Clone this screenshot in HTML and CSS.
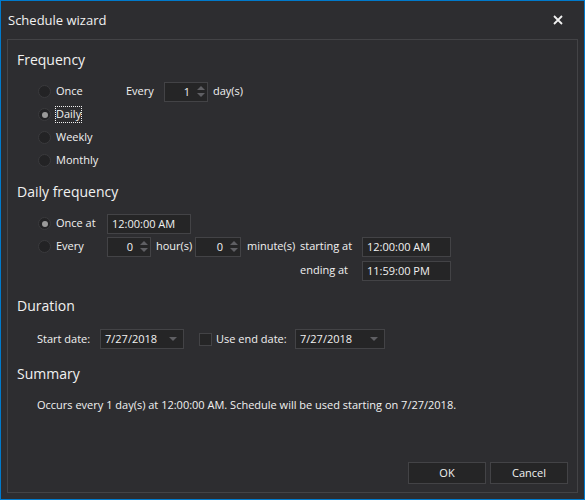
FILE: index.html
```html
<!DOCTYPE html>
<html>
<head>
<meta charset="utf-8">
<link rel="stylesheet" href="styles.css">
</head>
<body>
<div class="window">
  <div class="titlebar">
    <span class="title">Schedule wizard</span>
    <svg class="close" width="10" height="10" viewBox="0 0 10 10"><path d="M1 1L9 9M9 1L1 9" stroke="#f1f1f1" stroke-width="1.8"/></svg>
  </div>
  <div class="panel">
    <div class="heading">Frequency</div>
    <div class="rows first">
      <div class="row">
        <div class="opt w88"><span class="radio"></span><span class="lbl">Once</span></div>
        <span class="cell w38">Every</span>
        <div class="spin w44"><span class="val">1</span><span class="arrows"><i class="up"></i><i class="down"></i></span></div>
        <span class="cell pl5">day(s)</span>
      </div>
      <div class="row">
        <div class="opt"><span class="radio on"></span><span class="lbl focus">Daily</span></div>
      </div>
      <div class="row">
        <div class="opt"><span class="radio"></span><span class="lbl">Weekly</span></div>
      </div>
      <div class="row">
        <div class="opt"><span class="radio"></span><span class="lbl">Monthly</span></div>
      </div>
    </div>

    <div class="heading">Daily frequency</div>
    <div class="rows first">
      <div class="row">
        <div class="opt w69"><span class="radio on"></span><span class="lbl">Once at</span></div>
        <div class="box w84">12:00:00 AM</div>
      </div>
      <div class="row">
        <div class="opt w69"><span class="radio"></span><span class="lbl">Every</span></div>
        <div class="spin w44"><span class="val">0</span><span class="arrows"><i class="up"></i><i class="down"></i></span></div>
        <span class="cell w44 pl5">hour(s)</span>
        <div class="spin w46"><span class="val">0</span><span class="arrows"><i class="up"></i><i class="down"></i></span></div>
        <span class="cell w59 pl6">minute(s)</span>
        <span class="cell w62">starting at</span>
        <div class="box w89">12:00:00 AM</div>
      </div>
      <div class="row tall">
        <span class="spacer"></span>
        <span class="cell w62">ending at</span>
        <div class="box w89">11:59:00 PM</div>
      </div>
    </div>

    <div class="heading dur">Duration</div>
    <div class="rows dates">
      <div class="row ind">
        <span class="cell w63">Start date:</span>
        <div class="drop w84"><span>7/27/2018</span><i class="caret"></i></div>
        <span class="check"></span>
        <span class="cell w79">Use end date:</span>
        <div class="drop w90"><span>7/27/2018</span><i class="caret"></i></div>
      </div>
    </div>

    <div class="heading sum">Summary</div>
    <div class="rows summary">
      <div class="row ind">Occurs every 1 day(s) at 12:00:00 AM. Schedule will be used starting on 7/27/2018.</div>
    </div>

    <div class="footer">
      <button class="btn">OK</button>
      <button class="btn">Cancel</button>
    </div>
  </div>
</div>
</body>
</html>
```

FILE: styles.css
```css
* { box-sizing: border-box; }
html, body { margin: 0; padding: 0; background: #2d2d30; }
body {
  font-family: "Open Sans", "Noto Sans", sans-serif;
  font-size: 11px;
  color: #f1f1f1;
}
.window {
  width: 585px;
  height: 500px;
  border: 1px solid #007acc;
  background: #2d2d30;
  display: flex;
  flex-direction: column;
}
.titlebar {
  height: 38px;
  display: flex;
  align-items: center;
  padding-left: 7px;
  padding-right: 21px;
  padding-bottom: 1px;
  justify-content: space-between;
}
.title { font-size: 13px; color: #f1f1f1; }
.close { display: block; }
.panel {
  margin-left: 6px;
  width: 571px;
  height: 454px;
  border: 1px solid #434346;
  padding: 10px 9px 8px 9px;
  display: flex;
  flex-direction: column;
}
.heading {
  font-size: 14px;
  line-height: 19px;
  height: 20px;
  color: #f1f1f1;
}
.heading + .rows { margin-top: 10px; }
.rows + .heading { margin-top: 10px; }
.heading.dur { margin-top: 14px; }
.rows.dates { margin-top: 12px; }
.heading.sum { margin-top: 13px; }
.rows.summary { margin-top: 9px; }
.row {
  height: 23px;
  display: flex;
  align-items: center;
  padding-left: 21px;
  white-space: nowrap;
  line-height: 15px;
}
.row.tall { height: 24px; padding-top: 1px; }
.row.ind { padding-left: 20px; }
.lbl, .val, .row.ind { padding-bottom: 1px; }
.cell { padding-bottom: 2px; }
.opt { display: flex; align-items: center; flex: none; }
.radio {
  width: 13px;
  height: 13px;
  border-radius: 50%;
  background: #232325;
  border: 1px solid #3a3a3d;
  flex: none;
  display: flex;
  align-items: center;
  justify-content: center;
}
.radio.on::after {
  content: "";
  width: 6px;
  height: 6px;
  border-radius: 50%;
  background: #9a9a9a;
}
.lbl { border: 1px dotted transparent; margin-left: 4px; line-height: 14px; }
.lbl.focus { border-color: #f1f1f1; }
.cell { flex: none; }
.w38 { width: 38px; }
.w44 { width: 44px; }
.w46 { width: 46px; }
.w59 { width: 59px; }
.w62 { width: 62px; }
.w63 { width: 63px; }
.w69 { width: 69px; }
.w79 { width: 79px; }
.w84 { width: 84px; }
.w88 { width: 88px; }
.w89 { width: 89px; }
.w90 { width: 90px; }
.pl5 { padding-left: 5px; }
.pl6 { padding-left: 6px; }
.spacer { width: 262px; flex: none; }
.spin, .box, .drop {
  height: 20px;
  background: #252526;
  border: 1px solid #434346;
  flex: none;
  display: flex;
  align-items: center;
}
.box, .drop > span { padding-bottom: 1px; }
.spin { justify-content: flex-end; }
.spin .val { margin-right: 5px; }
.arrows {
  width: 12px;
  height: 18px;
  display: flex;
  flex-direction: column;
  align-items: center;
  justify-content: center;
  gap: 3px;
}
.arrows i {
  display: block;
  width: 0;
  height: 0;
  border-left: 4px solid transparent;
  border-right: 4px solid transparent;
}
.arrows .up { border-bottom: 4px solid #5f5f63; }
.arrows .down { border-top: 4px solid #5f5f63; }
.box { padding-left: 4px; }
.drop { padding-left: 4px; justify-content: space-between; padding-right: 6px; }
.caret {
  display: block;
  width: 0;
  height: 0;
  border-left: 4px solid transparent;
  border-right: 4px solid transparent;
  border-top: 4px solid #5f5f63;
}
.check {
  width: 13px;
  height: 13px;
  border: 1px solid #434346;
  background: #252526;
  margin-left: 15px;
  margin-right: 4px;
  flex: none;
}
.footer {
  margin-top: auto;
  display: flex;
  justify-content: flex-end;
  gap: 4px;
}
.btn {
  width: 78px;
  height: 22px;
  background: #252526;
  border: 1px solid #434346;
  color: #f1f1f1;
  font-family: inherit;
  font-size: 11px;
  padding: 0 0 2px 0;
}
```
